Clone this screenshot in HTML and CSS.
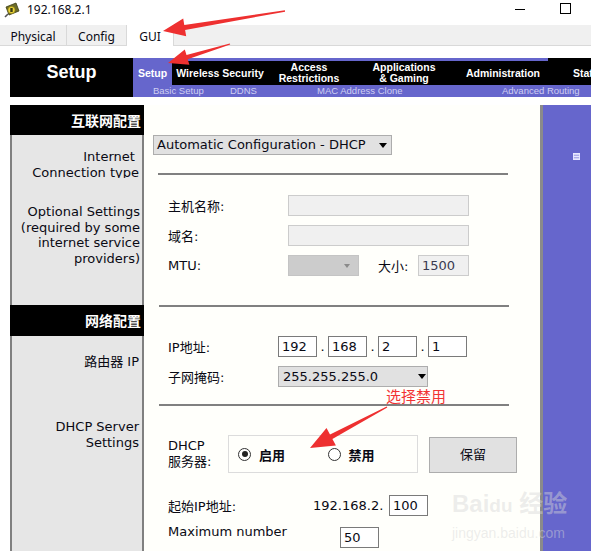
FILE: index.html
```html
<!DOCTYPE html>
<html>
<head>
<meta charset="utf-8">
<link rel="stylesheet" href="styles.css">
</head>
<body>
<div class="titlebar">
  <svg class="app-icon" viewBox="0 0 16 16">
    <polygon points="2,5 12,1 15,9 5,13" fill="#6b6b2a" stroke="#3d3d12" stroke-width="0.8"/>
    <circle cx="7.5" cy="8" r="3.6" fill="#e8d23a" stroke="#8a7a10" stroke-width="0.6"/>
    <rect x="6.3" y="6" width="2.4" height="4" fill="#3d3d12"/>
    <line x1="4" y1="12" x2="1" y2="15" stroke="#555" stroke-width="1.6"/>
  </svg>
  <span class="title">192.168.2.1</span>
  <span class="win-min"></span>
  <span class="win-max"></span>
</div>
<div class="tabbar">
  <div class="tab t-phys">Physical</div>
  <div class="tab t-conf">Config</div>
  <div class="tab t-gui active">GUI</div>
</div>
<div class="page">
  <div class="router">
    <div class="header">
      <div class="brand">Setup</div>
      <div class="nav">
        <div class="nav-top">
          <div class="nav-item active w-setup">Setup</div>
          <div class="nav-item w-wireless">Wireless Security</div>
          <div class="nav-item w-access">Access<br>Restrictions</div>
          <div class="nav-item w-apps">Applications<br>&amp; Gaming</div>
          <div class="nav-item w-admin">Administration</div>
          <div class="nav-item w-status">Status</div>
        </div>
        <div class="nav-sub">
          <span class="sub s1">Basic Setup</span>
          <span class="sub s2">DDNS</span>
          <span class="sub s3">MAC Address Clone</span>
          <span class="sub s4">Advanced Routing</span>
        </div>
      </div>
    </div>
    <div class="hgap"></div>
    <div class="main">
      <div class="form">
        <div class="lcell lhead">互联网配置</div>
        <div class="rcell"></div>

        <div class="lcell pad-b">Internet&nbsp;<br>Connection type</div>
        <div class="rcell">
          <div class="select sel-wide">Automatic Configuration - DHCP<i class="caret"></i></div>
          <div class="rule rule-b"></div>
        </div>

        <div class="lcell pad-c">Optional Settings<br>(required by some<br>internet service<br>providers)</div>
        <div class="rcell pad-rc">
          <div class="frow">
            <span class="lab lab-120">主机名称:</span>
            <span class="input in-long"></span>
          </div>
          <div class="frow gap9">
            <span class="lab lab-120">域名:</span>
            <span class="input in-long"></span>
          </div>
          <div class="frow gap9">
            <span class="lab lab-120">MTU:</span>
            <span class="select sel-mtu"><i class="caret caret-gray"></i></span>
            <span class="lab lab-size">大小:</span>
            <span class="input in-size">1500</span>
          </div>
        </div>

        <div class="lcell lhead">网络配置</div>
        <div class="rcell">
          <div class="rule"></div>
        </div>

        <div class="lcell pad-e">路由器 IP</div>
        <div class="rcell">
          <div class="frow">
            <span class="lab lab-110">IP地址:</span>
            <span class="input in-ip">192</span><span class="dot">.</span>
            <span class="input in-ip">168</span><span class="dot">.</span>
            <span class="input in-ip">2</span><span class="dot">.</span>
            <span class="input in-ip">1</span>
          </div>
          <div class="frow gap9">
            <span class="lab lab-110">子网掩码:</span>
            <span class="select sel-mask">255.255.255.0<i class="caret"></i></span>
          </div>
          <div class="rule rule-e"></div>
        </div>

        <div class="lcell pad-f">DHCP Server<br>Settings</div>
        <div class="rcell pad-rf">
          <div class="frow dhcp-row">
            <span class="lab lab-60 two">DHCP<br>服务器:</span>
            <div class="radio-box">
              <span class="radio-group"><i class="radio on"></i><b>启用</b></span>
              <span class="radio-group"><i class="radio"></i><b>禁用</b></span>
            </div>
            <div class="btn">保留</div>
          </div>
          <div class="frow start-row">
            <span class="lab lab-145">起始IP地址:</span>
            <span class="lab lab-76">192.168.2.</span>
            <span class="input in-ip">100</span>
          </div>
          <div class="frow max-row">
            <span class="lab lab-172 up">Maximum number</span>
            <span class="input in-ip">50</span>
          </div>
        </div>
      </div>
      <div class="sep"></div>
      <div class="sidebar">
        <svg class="tiny" viewBox="0 0 8 8">
          <rect x="0" y="0" width="8" height="8" fill="#e8e8ff"/>
          <rect x="1" y="2" width="6" height="1" fill="#8888dd"/>
          <rect x="1" y="5" width="6" height="1" fill="#8888dd"/>
        </svg>
      </div>
    </div>
  </div>
</div>

<div class="note">选择禁用</div>
<div class="watermark">
  <div class="wm-big">Bai<span class="wm-du">du</span> 经验</div>
  <div class="wm-small">jingyan.baidu.com</div>
</div>
<svg class="arrows" viewBox="0 0 591 551">
  <polygon fill="#ee3030" points="163,31 186.2,36.3 185.1,29.9 285.1,11.7 284.9,10.3 184.3,24.9 183.2,18.5"/>
  <polygon fill="#ee3030" points="168,63 189.4,64.8 187.7,59.2 230.2,44.6 229.8,43.4 186.5,55 184.8,49.4"/>
  <polygon fill="#ee3030" points="310,448 335.9,445.5 332.4,438.9 387.3,407.6 386.7,406.4 330,434.5 326.5,427.9"/>
</svg>
</body>
</html>
```

FILE: styles.css
```css
html, body {
  margin: 0;
  padding: 0;
}
body {
  width: 591px;
  height: 551px;
  overflow: hidden;
  position: relative;
  background: #ffffff;
  font-family: "DejaVu Sans", "Noto Sans CJK SC", sans-serif;
  font-size: 13px;
  color: #0a0a14;
}

/* title bar */
.titlebar {
  height: 25px;
  display: flex;
  align-items: flex-start;
  font-family: "Noto Sans", sans-serif;
  font-size: 12px;
}
.app-icon {
  width: 16px;
  height: 16px;
  margin: 2px 7px 0 4px;
}
.title {
  line-height: 20px;
}
.win-min {
  margin-left: auto;
  margin-top: 9px;
  width: 10px;
  height: 1px;
  background: #000;
  margin-right: 35px;
}
.win-max {
  margin-top: 3px;
  width: 9px;
  height: 9px;
  border: 1px solid #000;
  margin-right: 20px;
}

/* tab bar */
.tabbar {
  height: 20px;
  background: #f0f0f0;
  border-bottom: 1px solid #d9d9d9;
  display: flex;
  font-family: "Noto Sans", sans-serif;
  font-size: 12px;
}
.tab {
  box-sizing: border-box;
  height: 20px;
  line-height: 23px;
  text-align: center;
  border-right: 1px solid #d9d9d9;
}
.t-phys { width: 67px; }
.t-conf { width: 60px; }
.t-gui {
  width: 47px;
  background: #ffffff;
  height: 21px;
}

/* router page */
.page {
  width: 591px;
  overflow: hidden;
  padding: 12px 0 0 10px;
  box-sizing: border-box;
}
.router {
  width: 640px;
}
.header {
  display: flex;
  height: 39px;
}
.brand {
  width: 123px;
  background: #000;
  color: #fff;
  font-family: "Liberation Sans", sans-serif;
  font-weight: bold;
  font-size: 18px;
  line-height: 22px;
  padding-top: 3px;
  box-sizing: border-box;
  text-align: center;
}
.nav {
  width: 517px;
  background: #6666cc;
  display: flex;
  flex-direction: column;
}
.nav-top {
  display: flex;
  height: 27px;
}
.nav-item {
  box-sizing: border-box;
  height: 27px;
  background: #000;
  border-top: 3px solid #6666cc;
  color: #fff;
  font-family: "Liberation Sans", sans-serif;
  font-weight: bold;
  font-size: 10.5px;
  line-height: 11px;
  display: flex;
  align-items: center;
  justify-content: center;
  text-align: center;
}
.nav-item.active { background: #6666cc; }
.w-setup { width: 39px; }
.w-wireless { width: 96px; }
.w-access { width: 82px; }
.w-apps { width: 108px; }
.w-admin { width: 90px; }
.w-status {
  width: 102px;
  border-top-color: #000;
  justify-content: flex-start;
  padding-left: 25px;
}
.nav-sub {
  height: 12px;
  display: flex;
  padding-left: 20px;
  font-family: "Liberation Sans", sans-serif;
  font-size: 9.5px;
  line-height: 12px;
  color: #cfcff2;
}
.s1 { width: 77px; }
.s2 { width: 87px; }
.s3 { width: 185px; }
.s4 { width: 100px; }

.hgap { height: 8px; }

.main {
  display: flex;
  height: 446px;
}
.form {
  display: grid;
  grid-template-columns: 134px 396px;
  grid-template-rows: 30px 43px 127px 31px 70px 1fr;
}
.sep {
  width: 3px;
  background: #8a8a8a;
}
.sidebar {
  flex: 1;
  background: #6666cc;
}
.tiny {
  display: block;
  width: 7px;
  height: 7px;
  margin: 48px 0 0 30px;
}

/* left column */
.lcell {
  box-sizing: border-box;
  background: #e6e6e6;
  border-left: 2px solid #808080;
  border-right: 2px solid #808080;
  text-align: right;
  padding-right: 3px;
  line-height: 15.7px;
}
.lhead {
  background: #000;
  border-color: #000;
  color: #fff;
  font-weight: bold;
  font-size: 14px;
  line-height: 33px;
  padding-right: 1px;
}
.pad-b { padding-top: 14px; }
.pad-c { padding-top: 26px; padding-right: 2px; }
.pad-e { padding-top: 18px; }
.pad-f { padding-top: 13px; }

/* right column */
.rcell {
  background: #fffffb;
}
.pad-rc { padding-top: 17px; }
.pad-rf { padding-top: 29px; }

.rule {
  margin-left: 15px;
  width: 350px;
  height: 2px;
  background: #808080;
}
.rule-b { margin-top: 18px; margin-left: 14px; }
.rule-e { margin-top: 17px; }

.frow {
  display: flex;
  align-items: center;
  margin-left: 24px;
  height: 21px;
}
.gap9 { margin-top: 9px; }

.lab { flex: none; }
.lab-120 { width: 120px; }
.lab-110 { width: 110px; }
.lab-60 { width: 60px; }
.lab-145 { width: 145px; }
.lab-76 { width: 76px; }
.lab-172 { width: 172px; }
.lab-size { width: 40px; margin-left: 19px; }
.two { line-height: 16px; }
.up { align-self: flex-start; margin-top: -3px; }

.input {
  box-sizing: border-box;
  flex: none;
  height: 21px;
  line-height: 19px;
  padding-left: 3px;
  border: 1px solid #7a7a7a;
  background: #fff;
}
.in-long {
  width: 181px;
  background: #f0f0f0;
  border-color: #cccccc;
}
.in-size {
  width: 51px;
  background: #f0f0f0;
  border-color: #cccccc;
  color: #3a3a50;
}
.in-ip { width: 39px; }
.dot {
  width: 11px;
  text-align: center;
  line-height: 21px;
}

.select {
  box-sizing: border-box;
  position: relative;
  display: block;
  height: 20px;
  line-height: 18px;
  padding-left: 3px;
  border: 1px solid #adadad;
  background: #e1e1e1;
  white-space: nowrap;
}
.sel-wide {
  margin-left: 9px;
  width: 239px;
}
.sel-mtu {
  width: 71px;
  height: 21px;
  background: #cccccc;
  border-color: #c4c4c4;
  flex: none;
}
.sel-mask {
  width: 150px;
  height: 21px;
  line-height: 19px;
  padding-left: 4px;
  flex: none;
}
.caret {
  position: absolute;
  right: 4px;
  top: 7px;
  width: 0;
  height: 0;
  border-left: 4px solid transparent;
  border-right: 4px solid transparent;
  border-top: 5px solid #000;
}
.sel-mask .caret { right: 1px; }
.caret-gray {
  border-top-color: #8a8a8a;
  right: 8px;
  top: 8px;
  border-left-width: 3px;
  border-right-width: 3px;
  border-top-width: 4px;
}

.dhcp-row {
  height: 38px;
}
.radio-box {
  box-sizing: border-box;
  width: 190px;
  height: 38px;
  border: 1px solid #dcdcdc;
  display: flex;
  align-items: center;
  padding-left: 9px;
}
.radio-group {
  display: flex;
  align-items: center;
  width: 90px;
}
.radio-group b {
  margin-left: 8px;
  font-weight: bold;
}
.radio {
  box-sizing: border-box;
  width: 13px;
  height: 13px;
  border: 1px solid #333;
  border-radius: 50%;
  background: #fff;
  position: relative;
}
.radio.on::after {
  content: "";
  position: absolute;
  left: 2.5px;
  top: 2.5px;
  width: 6px;
  height: 6px;
  border-radius: 50%;
  background: #222;
}
.btn {
  box-sizing: border-box;
  margin-left: 11px;
  margin-top: 2px;
  width: 88px;
  height: 36px;
  border: 1px solid #adadad;
  background: #e1e1e1;
  text-align: center;
  line-height: 34px;
}
.start-row { margin-top: 22px; }
.max-row { margin-top: 11px; }

/* annotations and overlays */
.note {
  position: absolute;
  left: 386px;
  top: 386px;
  font-family: "Noto Sans CJK SC", sans-serif;
  font-size: 15px;
  line-height: 20px;
  color: #f23333;
}
.watermark {
  position: absolute;
  left: 452px;
  top: 490px;
  color: rgba(215, 215, 215, 0.45);
  font-family: "Liberation Sans", "Noto Sans CJK SC", sans-serif;
}
.wm-big {
  font-size: 24px;
  font-weight: bold;
  line-height: 28px;
}
.wm-du {
  font-size: 19px;
}
.wm-small {
  font-size: 14px;
  line-height: 18px;
  margin-top: 4px;
}
.arrows {
  position: absolute;
  left: 0;
  top: 0;
  width: 591px;
  height: 551px;
  pointer-events: none;
}
```
